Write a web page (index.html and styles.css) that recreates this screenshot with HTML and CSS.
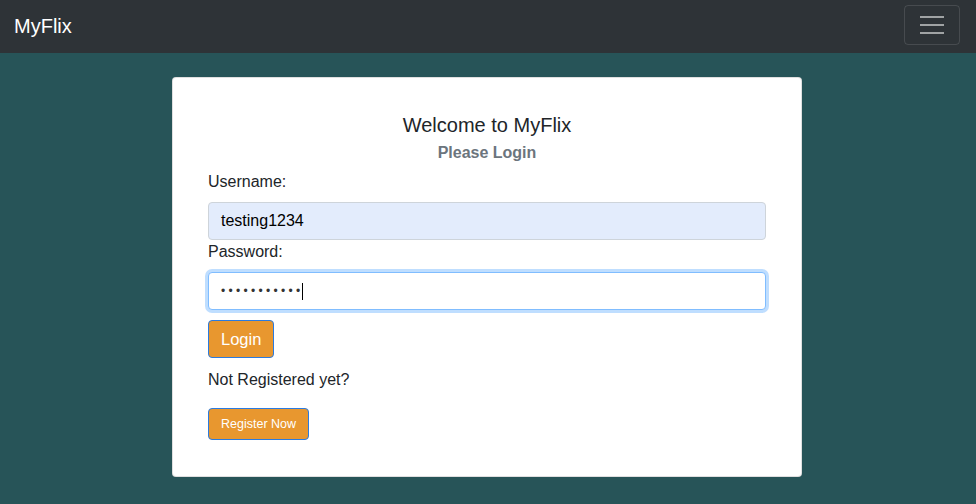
FILE: index.html
```html
<!DOCTYPE html>
<html>
<head>
<meta charset="utf-8">
<link rel="stylesheet" href="styles.css">
</head>
<body>
<nav class="navbar">
  <span class="brand">MyFlix</span>
  <button class="toggler" type="button" aria-label="Toggle navigation">
    <span class="bar"></span><span class="bar"></span><span class="bar"></span>
  </button>
</nav>
<main class="main">
  <div class="card">
    <h5 class="title">Welcome to MyFlix</h5>
    <h6 class="subtitle">Please Login</h6>
    <form class="form">
      <label class="label">Username:</label>
      <div class="input autofill">testing1234</div>
      <label class="label">Password:</label>
      <div class="input focused"><span class="dots">•••••••••••</span><span class="caret"></span></div>
      <button type="button" class="btn btn-login">Login</button>
      <p class="note">Not Registered yet?</p>
      <button type="button" class="btn btn-small">Register Now</button>
    </form>
  </div>
</main>
</body>
</html>
```

FILE: styles.css
```css
* { box-sizing: border-box; }
html, body { margin: 0; padding: 0; }
body {
  background: #275458;
  font-family: "Liberation Sans", Arial, sans-serif;
  color: #212529;
  font-size: 16px;
  line-height: 1.5;
  height: 504px;
  overflow: hidden;
}
.navbar {
  height: 53px;
  background: #2e3337;
  display: flex;
  align-items: center;
  justify-content: space-between;
  padding: 0 16px 0 14px;
}
.brand {
  color: #fff;
  font-size: 20px;
  line-height: 1;
  margin-top: -2px;
}
.toggler {
  width: 56px;
  height: 40px;
  margin-top: -4px;
  background: transparent;
  border: 1px solid rgba(255,255,255,0.12);
  border-radius: 4px;
  display: flex;
  flex-direction: column;
  align-items: center;
  justify-content: center;
  gap: 6px;
  padding: 0;
}
.bar {
  display: block;
  width: 24px;
  height: 2px;
  background: rgba(255,255,255,0.55);
}
.main {
  display: flex;
  justify-content: center;
  padding-top: 24px;
  padding-right: 2px;
}
.card {
  width: 630px;
  background: #fff;
  border: 1px solid rgba(0,0,0,0.125);
  border-radius: 4px;
  padding: 35px 35px 36px;
}
.title {
  margin: 0;
  text-align: center;
  font-size: 20px;
  font-weight: 400;
  line-height: 24px;
}
.subtitle {
  margin: 6px 0 0;
  text-align: center;
  font-size: 16px;
  font-weight: 600;
  color: #6c757d;
  line-height: 20px;
}
.form {
  display: flex;
  flex-direction: column;
  align-items: flex-start;
  margin-top: 7px;
}
.label {
  display: block;
  line-height: 24px;
  margin-bottom: 8px;
}
.input {
  width: 100%;
  height: 38px;
  border: 1px solid #ced4da;
  border-radius: 4px;
  padding: 0 12px;
  display: flex;
  align-items: center;
  font-size: 16px;
}
.autofill {
  background: #e3ecfc;
  color: #000;
}
.focused {
  background: #fff;
  border-color: #80bdff;
  box-shadow: 0 0 0 3px rgba(0,123,255,0.25);
}
.dots {
  font-size: 12px;
  letter-spacing: 3.3px;
  color: #333;
}
.caret {
  display: inline-block;
  width: 1px;
  height: 17px;
  background: #000;
  margin-left: -2px;
}
.btn {
  background: #e8972f;
  color: #fff;
  border: 1px solid #2b7be0;
  border-radius: 4px;
  font-family: inherit;
  cursor: pointer;
}
.btn-login {
  margin-top: 10px;
  height: 38px;
  padding: 0 12px;
  font-size: 16.5px;
}
.note {
  margin: 10px 0 16px;
  line-height: 24px;
}
.btn-small {
  height: 32px;
  padding: 0 12px;
  font-size: 12.5px;
}
```
